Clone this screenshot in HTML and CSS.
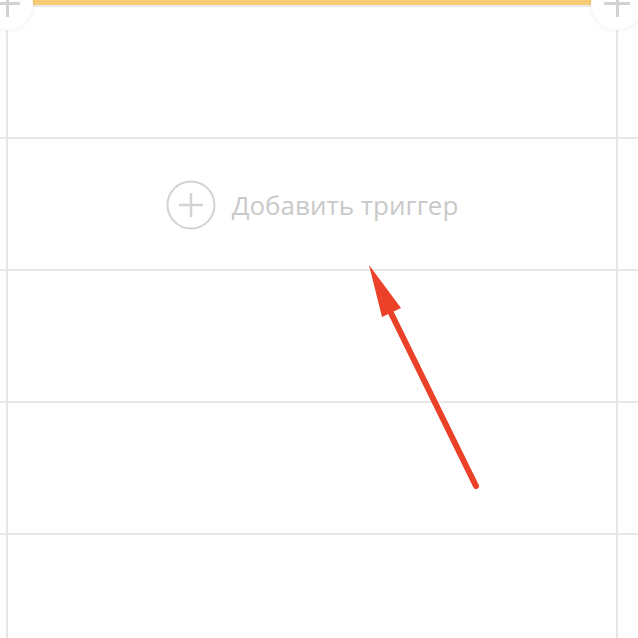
FILE: index.html
```html
<!DOCTYPE html>
<html lang="ru">
<head>
    <meta charset="UTF-8">
    <meta name="viewport" content="width=device-width, initial-scale=1.0">
    <title>Триггеры</title>
    <link rel="stylesheet" href="styles.css">
</head>
<body>
    <div class="stage">
        <div class="topbar"></div>

        <div class="row">
            <div class="cell"></div>
        </div>
        <div class="row">
            <div class="cell">
                <button class="add">
                    <svg class="add-icon" width="50" height="50" viewBox="0 0 50 50">
                        <circle cx="25" cy="25" r="23.5" fill="none" stroke="#d3d3d3" stroke-width="2"/>
                        <path d="M13 25H37M25 13V37" stroke="#d3d3d3" stroke-width="2.5"/>
                    </svg>
                    <span>Добавить триггер</span>
                </button>
            </div>
        </div>
        <div class="row">
            <div class="cell"></div>
        </div>
        <div class="row">
            <div class="cell"></div>
        </div>
        <div class="row">
            <div class="cell"></div>
        </div>

        <!-- corner buttons -->
        <div class="corner left"></div>
        <div class="corner right"></div>

        <!-- annotation arrow -->
        <svg class="arrow" width="638" height="638" viewBox="0 0 638 638">
            <line x1="476" y1="486" x2="390" y2="311" stroke="#ea4128" stroke-width="6" stroke-linecap="round"/>
            <polygon points="369,265 401,308 382,317" fill="#ea4128"/>
        </svg>
    </div>
</body>
</html>
```

FILE: styles.css
```css
*{
    margin: 0;
    padding: 0;
    box-sizing: border-box;
}
body{
    background: #fff;
    font-family: "Open Sans", "Noto Sans", sans-serif;
    overflow: hidden;
}
.stage{
    position: relative;
    width: 638px;
    height: 638px;
    overflow: hidden;
}
.topbar{
    height: 7px;
    margin: 0 21px 0 7px;
    background: #f9cb74;
    border-bottom: 2px solid #ebebeb;
}
.row{
    height: 132px;
    border-bottom: 2px solid #e6e6e6;
    display: flex;
}
.cell{
    flex: 1;
    margin: 0 20px 0 6px;
    border-left: 2px solid #e6e6e6;
    border-right: 2px solid #e6e6e6;
    display: flex;
    align-items: center;
    justify-content: center;
}
.add{
    display: flex;
    align-items: center;
    gap: 16px;
    background: none;
    border: none;
    font-family: inherit;
    font-size: 26px;
    color: #c9c9c9;
    cursor: pointer;
    margin-top: 2px;
}
.add-icon{
    display: block;
}
.corner{
    position: absolute;
    top: -22px;
    width: 52px;
    height: 52px;
    border-radius: 50%;
    background: #fff;
    box-shadow: 0 0 4px rgba(0,0,0,0.09);
}
.corner.left{
    left: -19px;
}
.corner.right{
    left: 591px;
}
.corner::before,
.corner::after{
    content: "";
    position: absolute;
    background: #d2d2d2;
}
.corner::before{
    left: 13px;
    top: 24px;
    width: 26px;
    height: 3px;
}
.corner::after{
    left: 25px;
    top: 13px;
    width: 3px;
    height: 26px;
}
.arrow{
    position: absolute;
    left: 0;
    top: 0;
    pointer-events: none;
}
```
